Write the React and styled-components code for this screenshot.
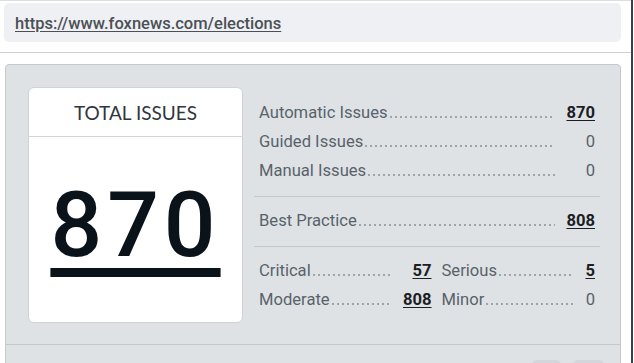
import React from "react";
import styled, { createGlobalStyle } from "styled-components";

const GlobalStyle = createGlobalStyle`
  html, body { margin: 0; padding: 0; background: #ffffff; overflow: hidden; }
  * { box-sizing: border-box; }
`;

const Page = styled.div`
  display: flex;
  width: 634px;
  height: 363px;
  overflow: hidden;
  background: #ffffff;
`;

const Main = styled.div`
  flex: 0 0 631px;
  display: flex;
  flex-direction: column;
  min-width: 0;
`;

const EdgeRule = styled.div`
  flex: 0 0 2px;
  background: #36414b;
`;

const TopStrip = styled.div`
  display: flex;
  justify-content: flex-end;
  height: 2px;
  border-bottom: 1px solid #dcdfe2;
  padding-right: 52px;
`;

const Tick = styled.div`
  width: 51px;
  border-left: 1px solid #c9cdd1;
  border-right: 1px solid #c9cdd1;
`;

const UrlSection = styled.div`
  padding: 2px 10px 10px 4px;
  border-bottom: 1px solid #cdd0d4;
`;

const UrlBox = styled.div`
  height: 39px;
  display: flex;
  align-items: center;
  padding: 1px 0 0 11px;
  background: #eff0f3;
  border-radius: 5px;
`;

const UrlLink = styled.a`
  font-family: Roboto, "Liberation Sans", sans-serif;
  font-size: 16.5px;
  font-weight: 500;
  color: #4b5056;
  text-decoration: underline;
  text-underline-offset: 2px;
`;

const PanelWrap = styled.div`
  padding: 11px 10px 0 5px;
`;

const Panel = styled.div`
  background: #dfe2e5;
  border: 1px solid #c4c9ce;
  border-radius: 4px;
`;

const PanelBody = styled.div`
  display: grid;
  grid-template-columns: 215px 1fr;
  column-gap: 11px;
  padding: 22px 20px 21px 22px;
  border-bottom: 1px solid #c3c8cd;
`;

const PanelFooter = styled.div`
  height: 40px;
  display: flex;
  justify-content: flex-end;
  gap: 12px;
  padding: 15px 16px 0 0;
`;

const FooterButton = styled.div`
  width: ${(p) => p.$w}px;
  height: 24px;
  border-radius: 5px;
  background: #d3d7db;
`;

const Card = styled.div`
  height: 236px;
  background: #ffffff;
  border: 1px solid #cfd3d7;
  border-radius: 6px;
  display: flex;
  flex-direction: column;
`;

const CardHeader = styled.div`
  height: 49px;
  border-bottom: 1px solid #d2d6da;
  display: flex;
  align-items: center;
  justify-content: center;
  padding-top: 1px;
  font-family: Lato, "Liberation Sans", sans-serif;
  font-size: 19px;
  color: #2f363c;
`;

const CardBody = styled.div`
  flex: 1;
  display: flex;
  align-items: center;
  justify-content: center;
  padding: 0 0 8px 0;
`;

const BigNumber = styled.a`
  font-family: Roboto, "Liberation Sans", sans-serif;
  font-size: 91px;
  font-weight: 500;
  line-height: 1;
  letter-spacing: 5px;
  color: #0a121a;
  text-decoration: underline;
  text-decoration-thickness: 9px;
  text-underline-offset: 12px;
`;

const Stats = styled.div`
  padding-top: 12px;
  display: flex;
  flex-direction: column;
`;

const Block = styled.div`
  display: grid;
  grid-template-columns: ${(p) => (p.$split ? "1fr auto 1fr auto" : "1fr auto")};
  grid-auto-rows: 29px;
  padding: 0 5px;
  font-family: Roboto, "Liberation Sans", sans-serif;
  font-size: 16.6px;
  color: #58626b;
`;

const Divider = styled.div`
  height: 1px;
  background: #c3c8cc;
  margin: 10px 0;
`;

const LabelCell = styled.div`
  display: flex;
  align-items: baseline;
  min-width: 0;
  padding-top: 4px;
`;

const Leader = styled.span`
  flex: 1;
  height: 2px;
  margin-left: 2px;
  background-image: radial-gradient(
    circle at 1px 1px,
    #8a939a 0,
    #8a939a 0.6px,
    transparent 1.1px
  );
  background-size: 5px 2px;
  background-repeat: repeat-x;
`;

const ValueCell = styled.div`
  padding: 4px 0 0 11px;
  margin-right: ${(p) => (p.$gap ? "10px" : "0")};
  text-align: right;
`;

const ValueLink = styled.a`
  font-weight: 700;
  color: #1b1f24;
  text-decoration: underline;
  text-underline-offset: 2px;
`;

function Value({ v, gap }) {
  return (
    <ValueCell $gap={gap}>
      {v > 0 ? <ValueLink href="#">{v}</ValueLink> : v}
    </ValueCell>
  );
}

function Row({ label, value, gap }) {
  return (
    <>
      <LabelCell>
        {label}
        <Leader />
      </LabelCell>
      <Value v={value} gap={gap} />
    </>
  );
}

export default function App() {
  return (
    <>
      <GlobalStyle />
      <Page>
        <Main>
          <TopStrip>
            <Tick />
          </TopStrip>
          <UrlSection>
            <UrlBox>
              <UrlLink href="#">https://www.foxnews.com/elections</UrlLink>
            </UrlBox>
          </UrlSection>
          <PanelWrap>
            <Panel>
              <PanelBody>
                <Card>
                  <CardHeader>TOTAL ISSUES</CardHeader>
                  <CardBody>
                    <BigNumber href="#">870</BigNumber>
                  </CardBody>
                </Card>
                <Stats>
                  <Block>
                    <Row label="Automatic Issues" value={870} />
                    <Row label="Guided Issues" value={0} />
                    <Row label="Manual Issues" value={0} />
                  </Block>
                  <Divider />
                  <Block>
                    <Row label="Best Practice" value={808} />
                  </Block>
                  <Divider />
                  <Block $split>
                    <Row label="Critical" value={57} gap />
                    <Row label="Serious" value={5} />
                    <Row label="Moderate" value={808} gap />
                    <Row label="Minor" value={0} />
                  </Block>
                </Stats>
              </PanelBody>
              <PanelFooter>
                <FooterButton $w={29} />
                <FooterButton $w={31} />
              </PanelFooter>
            </Panel>
          </PanelWrap>
        </Main>
        <EdgeRule />
      </Page>
    </>
  );
}
